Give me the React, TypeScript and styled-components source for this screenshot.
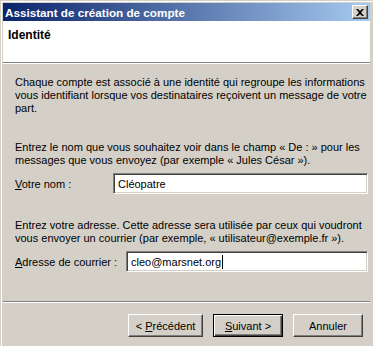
import styled, { createGlobalStyle } from "styled-components";

const GlobalStyle = createGlobalStyle`
  html, body {
    margin: 0;
    padding: 0;
    background: #d4d0c8;
  }
  body {
    font-family: "Liberation Sans", Arial, sans-serif;
    font-size: 11px;
    color: #000;
  }
`;

const Window = styled.div`
  width: 373px;
  height: 346px;
  box-sizing: border-box;
  padding: 3px 3px 0 3px;
  background: #d4d0c8;
  box-shadow: inset 1px 1px 0 #d4d0c8, inset 2px 2px 0 #ffffff;
  display: flex;
  flex-direction: column;
  overflow: hidden;
`;

const TitleBar = styled.div`
  height: 18px;
  display: flex;
  align-items: center;
  justify-content: space-between;
  padding: 0 2px 0 2px;
  background: linear-gradient(to right, #0a246a, #a6caf0);
  color: #fff;
  font-weight: bold;
  font-size: 11.7px;
`;

const CloseButton = styled.div`
  width: 16px;
  height: 14px;
  box-sizing: border-box;
  background: #d4d0c8;
  border-top: 1px solid #fff;
  border-left: 1px solid #fff;
  border-right: 1px solid #404040;
  border-bottom: 1px solid #404040;
  box-shadow: inset -1px -1px 0 #808080;
  display: flex;
  align-items: center;
  justify-content: center;
`;

const Header = styled.div`
  height: 42px;
  box-sizing: border-box;
  background: #fff;
  padding: 8px 5px 0;
  font-weight: bold;
  font-size: 12px;
  line-height: 13px;
  border-bottom: 1px solid #808080;
  box-shadow: 0 1px 0 #fff;
  margin-bottom: 1px;
`;

const Content = styled.div`
  height: 237px;
  box-sizing: border-box;
  padding: 12px 2px 0 12px;
  display: flex;
  flex-direction: column;
`;

const Paragraph = styled.p<{ $gap: number }>`
  margin: ${(p) => p.$gap}px 0 0;
  line-height: 13px;
  white-space: nowrap;
`;

const Row = styled.div<{ $gap: number; $label: number }>`
  margin-top: ${(p) => p.$gap}px;
  display: grid;
  grid-template-columns: ${(p) => p.$label}px 1fr;
  align-items: center;
`;

const Field = styled.div`
  height: 21px;
  box-sizing: border-box;
  background: #fff;
  border-top: 1px solid #808080;
  border-left: 1px solid #808080;
  border-right: 1px solid #fff;
  border-bottom: 1px solid #fff;
  box-shadow: inset 1px 1px 0 #404040, inset -1px -1px 0 #d4d0c8;
  padding: 0 4px;
  display: flex;
  align-items: center;
`;

const Caret = styled.span`
  display: inline-block;
  width: 1px;
  height: 14px;
  background: #000;
  margin-left: 1px;
`;

const Footer = styled.div`
  border-top: 1px solid #808080;
  box-shadow: inset 0 1px 0 #fff;
  padding: 12px 7px 0 0;
  display: flex;
  justify-content: flex-end;
  gap: 10px;
`;

const Button = styled.div<{ $width: number; $default?: boolean }>`
  width: ${(p) => p.$width}px;
  height: 23px;
  box-sizing: border-box;
  background: #d4d0c8;
  display: flex;
  align-items: center;
  justify-content: center;
  border: 1px solid ${(p) => (p.$default ? "#000" : "transparent")};
  border-top-color: ${(p) => (p.$default ? "#000" : "#fff")};
  border-left-color: ${(p) => (p.$default ? "#000" : "#fff")};
  border-right-color: ${(p) => (p.$default ? "#000" : "#404040")};
  border-bottom-color: ${(p) => (p.$default ? "#000" : "#404040")};
  box-shadow: ${(p) =>
    p.$default
      ? "inset 1px 1px 0 #fff, inset -1px -1px 0 #404040, inset -2px -2px 0 #808080"
      : "inset -1px -1px 0 #808080"};
`;

const Key = styled.u`
  text-decoration: underline;
  text-underline-offset: 1px;
`;

export default function App() {
  return (
    <>
      <GlobalStyle />
      <Window>
        <TitleBar>
          <span>Assistant de création de compte</span>
          <CloseButton>
            <svg width="8" height="7" viewBox="0 0 8 7">
              <path d="M0 0h2l2 2 2-2h2L5 3.5 8 7H6L4 5 2 7H0l3-3.5z" fill="#000" />
            </svg>
          </CloseButton>
        </TitleBar>
        <Header>Identité</Header>
        <Content>
          <Paragraph $gap={0}>
            Chaque compte est associé à une identité qui regroupe les informations
            <br />
            vous identifiant lorsque vos destinataires reçoivent un message de votre
            <br />
            part.
          </Paragraph>
          <Paragraph $gap={26}>
            Entrez le nom que vous souhaitez voir dans le champ « De : » pour les
            <br />
            messages que vous envoyez (par exemple « Jules César »).
          </Paragraph>
          <Row $gap={6} $label={98}>
            <span>
              <Key>V</Key>otre nom :
            </span>
            <Field>Cléopatre</Field>
          </Row>
          <Paragraph $gap={25}>
            Entrez votre adresse. Cette adresse sera utilisée par ceux qui voudront
            <br />
            vous envoyer un courrier (par exemple, « utilisateur@exemple.fr »).
          </Paragraph>
          <Row $gap={6} $label={111}>
            <span>
              <Key>A</Key>dresse de courrier :
            </span>
            <Field>
              cleo@marsnet.org
              <Caret />
            </Field>
          </Row>
        </Content>
        <Footer>
          <Button $width={75}>
            &lt;&nbsp;<Key>P</Key>récédent
          </Button>
          <Button $width={70} $default>
            <Key>S</Key>uivant &gt;
          </Button>
          <Button $width={70}>Annuler</Button>
        </Footer>
      </Window>
    </>
  );
}
